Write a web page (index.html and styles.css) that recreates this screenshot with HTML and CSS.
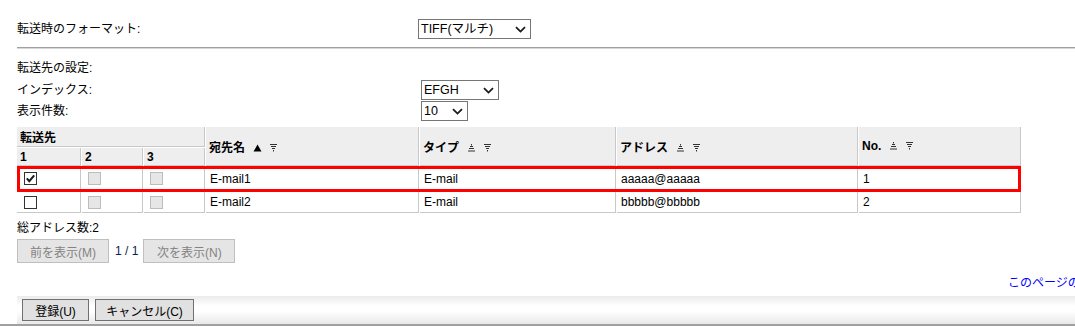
FILE: index.html
```html
<!DOCTYPE html>
<html lang="ja">
<head>
<meta charset="utf-8">
<title>転送設定</title>
<link rel="stylesheet" href="styles.css">
</head>
<body>
<div class="page">
  <div class="row row-format">
    <span class="label">転送時のフォーマット:</span>
    <span class="select sel-format"><span class="sel-text">TIFF(マルチ)</span><svg class="chev" width="11" height="7" viewBox="0 0 11 7"><path d="M1 1.2 L5.5 5.6 L10 1.2" fill="none" stroke="#1a1a1a" stroke-width="1.8"/></svg></span>
  </div>
  <div class="rule"></div>
  <div class="row row-plain"><span class="label">転送先の設定:</span></div>
  <div class="row row-opt">
    <span class="label">インデックス:</span>
    <span class="select sel-index"><span class="sel-text">EFGH</span><svg class="chev" width="11" height="7" viewBox="0 0 11 7"><path d="M1 1.2 L5.5 5.6 L10 1.2" fill="none" stroke="#1a1a1a" stroke-width="1.8"/></svg></span>
  </div>
  <div class="row row-opt row-count">
    <span class="label">表示件数:</span>
    <span class="select sel-count"><span class="sel-text">10</span><svg class="chev" width="11" height="7" viewBox="0 0 11 7"><path d="M1 1.2 L5.5 5.6 L10 1.2" fill="none" stroke="#1a1a1a" stroke-width="1.8"/></svg></span>
  </div>

  <div class="table-wrap">
    <table class="list">
      <colgroup>
        <col class="c-dest"><col class="c-dest2"><col class="c-dest3">
        <col class="c-name"><col class="c-type"><col class="c-addr"><col class="c-no">
      </colgroup>
      <thead>
        <tr class="h1">
          <th colspan="3">転送先</th>
          <th rowspan="2" class="th-sort">宛先名<svg class="sort s-first" width="9" height="8" viewBox="0 0 9 8"><path d="M0.5 7.5 L4.5 0.5 L8.5 7.5 Z" fill="#000"/></svg><svg class="sort" width="9" height="8" viewBox="0 0 9 8"><rect x="1" y="0" width="7" height="1" fill="#333"/><rect x="2" y="2" width="5" height="1" fill="#333"/><rect x="3" y="4" width="3" height="1" fill="#333"/><rect x="4" y="6" width="1" height="1.5" fill="#333"/></svg></th>
          <th rowspan="2" class="th-sort">タイプ<svg class="sort s-first" width="9" height="8" viewBox="0 0 9 8"><rect x="4" y="0" width="1" height="1.5" fill="#333"/><rect x="3" y="2" width="3" height="1" fill="#333"/><rect x="2" y="4" width="5" height="1" fill="#333"/><rect x="1" y="6.5" width="7" height="1" fill="#333"/></svg><svg class="sort" width="9" height="8" viewBox="0 0 9 8"><rect x="1" y="0" width="7" height="1" fill="#333"/><rect x="2" y="2" width="5" height="1" fill="#333"/><rect x="3" y="4" width="3" height="1" fill="#333"/><rect x="4" y="6" width="1" height="1.5" fill="#333"/></svg></th>
          <th rowspan="2" class="th-sort">アドレス<svg class="sort s-first" width="9" height="8" viewBox="0 0 9 8"><rect x="4" y="0" width="1" height="1.5" fill="#333"/><rect x="3" y="2" width="3" height="1" fill="#333"/><rect x="2" y="4" width="5" height="1" fill="#333"/><rect x="1" y="6.5" width="7" height="1" fill="#333"/></svg><svg class="sort" width="9" height="8" viewBox="0 0 9 8"><rect x="1" y="0" width="7" height="1" fill="#333"/><rect x="2" y="2" width="5" height="1" fill="#333"/><rect x="3" y="4" width="3" height="1" fill="#333"/><rect x="4" y="6" width="1" height="1.5" fill="#333"/></svg></th>
          <th rowspan="2" class="th-sort">No.<svg class="sort s-first" width="9" height="8" viewBox="0 0 9 8"><rect x="4" y="0" width="1" height="1.5" fill="#333"/><rect x="3" y="2" width="3" height="1" fill="#333"/><rect x="2" y="4" width="5" height="1" fill="#333"/><rect x="1" y="6.5" width="7" height="1" fill="#333"/></svg><svg class="sort" width="9" height="8" viewBox="0 0 9 8"><rect x="1" y="0" width="7" height="1" fill="#333"/><rect x="2" y="2" width="5" height="1" fill="#333"/><rect x="3" y="4" width="3" height="1" fill="#333"/><rect x="4" y="6" width="1" height="1.5" fill="#333"/></svg></th>
        </tr>
        <tr class="h2">
          <th>1</th><th>2</th><th>3</th>
        </tr>
      </thead>
      <tbody>
        <tr class="r1">
          <td><span class="cb cb-on"><svg width="11" height="11" viewBox="0 0 11 11"><path d="M1.8 5.3 L4.3 8.2 L9.2 2.3" fill="none" stroke="#1a1a1a" stroke-width="2"/></svg></span></td>
          <td><span class="cb cb-dis"></span></td>
          <td><span class="cb cb-dis"></span></td>
          <td>E-mail1</td>
          <td>E-mail</td>
          <td>aaaaa@aaaaa</td>
          <td>1</td>
        </tr>
        <tr class="r2">
          <td><span class="cb"></span></td>
          <td><span class="cb cb-dis"></span></td>
          <td><span class="cb cb-dis"></span></td>
          <td>E-mail2</td>
          <td>E-mail</td>
          <td>bbbbb@bbbbb</td>
          <td>2</td>
        </tr>
      </tbody>
    </table>
    <div class="highlight"></div>
  </div>

  <div class="total">総アドレス数:2</div>
  <div class="pager">
    <button class="btn btn-dis" type="button">前を表示(M)</button>
    <span class="pages">1 / 1</span>
    <button class="btn btn-dis" type="button">次を表示(N)</button>
  </div>
  <div class="toplink"><a href="#">このページの先頭へ</a></div>
</div>
<div class="footer">
  <div class="bar">
    <button class="btn btn-act" type="button">登録(U)</button>
    <button class="btn btn-act btn-cancel" type="button">キャンセル(C)</button>
  </div>
</div>
</body>
</html>
```

FILE: styles.css
```css
html, body {
  margin: 0;
  padding: 0;
  overflow: hidden;
  background: #fff;
}
body {
  font-family: "Liberation Sans", "Noto Sans CJK JP", sans-serif;
  font-size: 12px;
  color: #000;
  width: 1075px;
  height: 327px;
}
.page {
  padding: 19px 0 0 17px;
}
.row {
  display: flex;
  align-items: center;
  height: 20px;
}
.row .label {
  display: inline-block;
  line-height: 20px;
}
.row-format .label { width: 401px; }
.row-opt .label { width: 404px; }
.row-plain { margin-top: 9px; }
.row-opt { margin-top: 2px; }
.row-count { margin-top: 1px; }
.rule {
  margin-top: 8px;
  height: 0;
  border-top: 1px solid #a0a0a0;
  border-bottom: 1px solid #d8d8d8;
}
.select {
  box-sizing: border-box;
  height: 20px;
  border: 1px solid #767676;
  background: #fff;
  display: inline-flex;
  align-items: center;
  justify-content: space-between;
  padding: 0 4px 0 2px;
}
.sel-format { width: 113px; }
.sel-index { width: 78px; }
.sel-count { width: 47px; }
.sel-text { line-height: 18px; font-size: 12.5px; }
.chev { display: block; }

.table-wrap {
  position: relative;
  margin-top: 5px;
  margin-left: -1px;
  width: 1005px;
}
.list {
  border-collapse: separate;
  border-spacing: 1px;
  table-layout: fixed;
  width: 1005px;
}
.c-dest { width: 64px; }
.c-dest2 { width: 61px; }
.c-dest3 { width: 61px; }
.c-name { width: 213px; }
.c-type { width: 196px; }
.c-addr { width: 241px; }
.c-no { width: 162px; }
.list th, .list td {
  border-right: 1px solid #c8c8c8;
  border-bottom: 1px solid #c8c8c8;
  padding: 0 3px;
  text-align: left;
  white-space: nowrap;
  overflow: hidden;
}
.list th {
  background: #eeeeee;
  font-weight: bold;
}
.h1 th { height: 19px; }
.h2 th { height: 17px; }
.th-sort { padding-left: 4px; }
.sort {
  display: inline-block;
  vertical-align: 0;
  margin-left: 7px;
}
.sort.s-first { margin-left: 8px; }
.list td {
  background: #fff;
  padding-left: 4px;
}
.r1 td { height: 23px; }
.r2 td { height: 20px; }
.cb {
  box-sizing: border-box;
  display: block;
  width: 13px;
  height: 13px;
  border: 1px solid #333;
  background: #fff;
  margin-left: 3px;
  position: relative;
}
.cb svg {
  display: block;
  position: absolute;
  left: 0;
  top: 0;
}
.cb-dis {
  border-color: #bcbcbc;
  background: #e6e6e6;
  margin-left: 2px;
}
.highlight {
  position: absolute;
  left: 1px;
  top: 40px;
  width: 1004px;
  height: 26px;
  box-sizing: border-box;
  border: 3px solid #ff0000;
  pointer-events: none;
}

.total {
  margin-top: 6px;
  line-height: 16px;
}
.pager {
  display: flex;
  align-items: center;
  margin-top: 3px;
}
.btn {
  font-family: "Liberation Sans", "Noto Sans CJK JP", sans-serif;
  font-size: 12px;
  box-sizing: border-box;
  height: 24px;
  padding: 0 6px;
  margin: 0;
  border: 1px solid #adadad;
  background: #e1e1e1;
  color: #000;
  border-radius: 0;
}
.btn-dis {
  width: 92px;
  color: #838383;
  background: #e5e5e5;
  border-color: #bfbfbf;
}
.pages {
  padding: 0 5px 0 6px;
  color: #0b1e4d;
}
.toplink {
  margin-top: 12px;
  padding-left: 991px;
  white-space: nowrap;
  line-height: 16px;
}
.toplink a {
  color: #0000ff;
  text-decoration: none;
}
.footer {
  margin-top: 5px;
  border-bottom: 2px solid #a0a0a0;
}
.bar {
  margin-left: 17px;
  height: 28px;
  box-sizing: border-box;
  padding: 3px 0 0 5px;
  display: flex;
  gap: 6px;
  background: linear-gradient(#ebebeb 0%, #ffffff 35%, #ffffff 55%, #e9e9e9 100%);
}
.btn-act {
  height: 22px;
  border-color: #707070;
  padding: 0 7px;
}
.btn-act:first-child { width: 67px; }
.btn-cancel { width: 99px; }
```
